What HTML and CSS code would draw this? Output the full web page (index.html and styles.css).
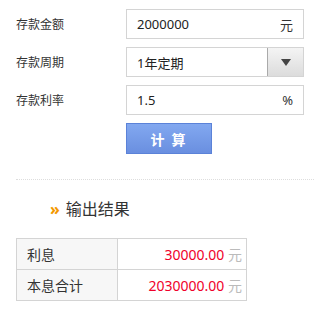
FILE: index.html
```html
<!DOCTYPE html>
<html lang="zh-CN">
<head>
    <meta charset="UTF-8">
    <title>存款计算器</title>
    <link rel="stylesheet" href="styles.css">
</head>
<body>
    <div class="calc">
        <div class="form">
            <div class="row">
                <label class="label">存款金额</label>
                <div class="field">
                    <span class="value">2000000</span>
                    <span class="unit">元</span>
                </div>
            </div>
            <div class="row row-select">
                <label class="label">存款周期</label>
                <div class="field select">
                    <span class="value">1年定期</span>
                    <span class="arrow"><i></i></span>
                </div>
            </div>
            <div class="row row-rate">
                <label class="label">存款利率</label>
                <div class="field">
                    <span class="value">1.5</span>
                    <span class="unit">%</span>
                </div>
            </div>
            <div class="actions">
                <button class="btn">计 算</button>
            </div>
        </div>

        <div class="result">
            <h3 class="title"><span class="mark">»</span>输出结果</h3>
            <table class="table">
                <tr>
                    <th>利息</th>
                    <td><span class="num">30000.00</span> <span class="yuan">元</span></td>
                </tr>
                <tr>
                    <th>本息合计</th>
                    <td><span class="num">2030000.00</span> <span class="yuan">元</span></td>
                </tr>
            </table>
        </div>
    </div>
</body>
</html>
```

FILE: styles.css
```css
body {
    margin: 0;
    padding: 0;
    background-color: #fff;
    font-family: "Noto Sans", "Noto Sans CJK SC", sans-serif;
    color: #333;
}

.calc {
    width: 314px;
}

.form {
    padding: 9px 10px 0 16px;
}

.row {
    display: flex;
    align-items: center;
    margin-bottom: 8px;
}

.row-rate {
    margin-top: 6px;
}

.label {
    width: 110px;
    font-size: 12px;
    color: #333;
}

.field {
    display: flex;
    align-items: center;
    justify-content: space-between;
    box-sizing: border-box;
    width: 178px;
    height: 30px;
    border: 1px solid #d4d4d4;
    padding: 0 10px;
    font-size: 13px;
    color: #222;
}

.unit {
    font-size: 13px;
    color: #333;
}

.select {
    padding-right: 0;
}

.arrow {
    display: flex;
    align-items: center;
    justify-content: center;
    width: 35px;
    height: 28px;
    border-left: 1px solid #aaa;
    background: linear-gradient(#f4f4f4, #dcdcdc);
}

.arrow i {
    width: 0;
    height: 0;
    border-left: 5px solid transparent;
    border-right: 5px solid transparent;
    border-top: 7px solid #444;
}

.actions {
    display: flex;
    padding-left: 110px;
    margin-top: 2px;
}

.btn {
    box-sizing: border-box;
    width: 86px;
    height: 31px;
    border: 1px solid #5b82d8;
    background: linear-gradient(#82a8f0, #6a8fe0);
    color: #fff;
    font-family: "Noto Sans CJK SC", sans-serif;
    font-size: 14px;
    font-weight: bold;
    letter-spacing: 2px;
    cursor: pointer;
}

.result {
    margin: 25px 0 0 16px;
    border-top: 1px dotted #ddd;
}

.title {
    margin: 16px 0 18px 34px;
    font-size: 16px;
    font-weight: normal;
    color: #333;
}

.mark {
    color: #f39800;
    font-weight: bold;
    margin-right: 6px;
}

.table {
    border-collapse: collapse;
    width: 231px;
    font-size: 14px;
}

.table th,
.table td {
    height: 30px;
    border: 1px solid #d4d4d4;
    padding: 0 10px;
}

.table th {
    width: 80px;
    text-align: left;
    font-weight: normal;
    background-color: #f7f7f7;
    color: #333;
}

.table td {
    text-align: right;
    padding-right: 4px;
}

.num {
    color: #f0002a;
}

.yuan {
    color: #bbb;
}
```
